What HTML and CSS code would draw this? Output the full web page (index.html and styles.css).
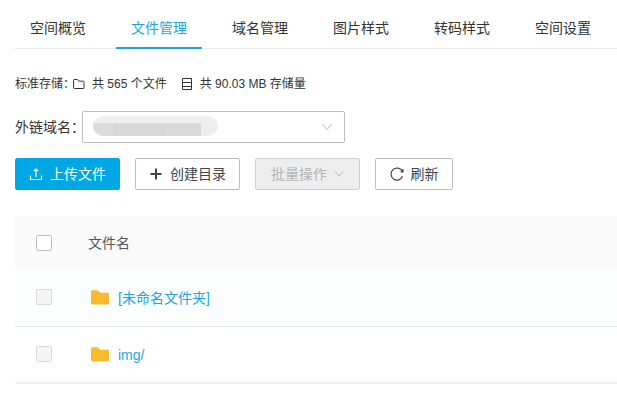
FILE: index.html
```html
<!DOCTYPE html>
<html lang="zh-CN">
<head>
<meta charset="utf-8">
<meta name="viewport" content="width=device-width, initial-scale=1">
<title>文件管理</title>
<link rel="stylesheet" href="styles.css">
</head>
<body>
<main class="page">
  <nav class="tabs">
    <a class="tab" href="#overview">空间概览</a>
    <a class="tab active" href="#files" aria-current="page">文件管理</a>
    <a class="tab" href="#domains">域名管理</a>
    <a class="tab" href="#images">图片样式</a>
    <a class="tab" href="#transcode">转码样式</a>
    <a class="tab" href="#settings">空间设置</a>
  </nav>

  <div class="stats">
    <span class="stats-label">标准存储：</span>
    <span class="stat">
      <svg class="stat-icon" viewBox="0 0 12 12" aria-hidden="true"><path d="M1.2 1.5h3.2l1.4 1.7h4.6q.6 0 .6.6v6q0 .7-.6.7H1.3q-.7 0-.7-.7V2.1q0-.6.6-.6z"/></svg>
      <span>共 565 个文件</span>
    </span>
    <span class="stat">
      <svg class="stat-icon" viewBox="0 0 12 12" aria-hidden="true"><path d="M1.5 .5h9v11h-9zM1.5 4.5h9M1.5 8.5h9"/></svg>
      <span>共 90.03 MB 存储量</span>
    </span>
  </div>

  <div class="domain">
    <label class="domain-label" for="domain">外链域名：</label>
    <div class="select-box">
      <select id="domain" class="select"><option></option></select>
      <span class="masked"></span>
      <svg class="chevron select-chevron" viewBox="0 0 10 8" aria-hidden="true"><path d="M.7 1L5 6.6 9.3 1"/></svg>
    </div>
  </div>

  <div class="actions">
    <button class="btn primary" type="button">
      <svg class="icon" viewBox="0 0 14 14" aria-hidden="true"><path d="M1.5 8.5v4h11v-4M7 10V2.2M4.8 4.2L7 2l2.2 2.2" stroke-width="1.2"/></svg>
      <span>上传文件</span>
    </button>
    <button class="btn" type="button">
      <svg class="icon plus" viewBox="0 0 14 14" aria-hidden="true"><path d="M7 1.5v11M1.5 7h11"/></svg>
      <span>创建目录</span>
    </button>
    <button class="btn" type="button" disabled>
      <span>批量操作</span>
      <svg class="chevron" viewBox="0 0 10 8" aria-hidden="true"><path d="M1 1l4 5.2L9 1"/></svg>
    </button>
    <button class="btn compact" type="button">
      <svg class="icon" viewBox="0 0 14 14" aria-hidden="true"><path d="M12.6 9.3A6 6 0 1 1 12.4 4.4M12.9 1.9v2.9h-2.3" stroke-width="1.2"/></svg>
      <span>刷新</span>
    </button>
  </div>

  <table class="files">
    <thead>
      <tr>
        <th class="check-cell"><input class="check" type="checkbox" aria-label="全选"></th>
        <th>文件名</th>
      </tr>
    </thead>
    <tbody>
      <tr class="current">
        <td class="check-cell"><input class="check" type="checkbox" aria-label="[未命名文件夹]" disabled></td>
        <td><a class="file" href="#unnamed"><svg class="folder" viewBox="0 0 18 15" aria-hidden="true"><path d="M1.3 .3h5.2q.6 0 1 .5l1.8 2h7.2q1.5 0 1.5 1.4v9q0 1.4-1.4 1.4H1.4Q0 14.6 0 13.2V1.6Q0 .3 1.3 .3z"/></svg><span>[未命名文件夹]</span></a></td>
      </tr>
      <tr>
        <td class="check-cell"><input class="check" type="checkbox" aria-label="img/" disabled></td>
        <td><a class="file" href="#img"><svg class="folder" viewBox="0 0 18 15" aria-hidden="true"><path d="M1.3 .3h5.2q.6 0 1 .5l1.8 2h7.2q1.5 0 1.5 1.4v9q0 1.4-1.4 1.4H1.4Q0 14.6 0 13.2V1.6Q0 .3 1.3 .3z"/></svg><span>img/</span></a></td>
      </tr>
    </tbody>
  </table>
</main>
</body>
</html>
```
FILE: styles.css
```css
* {
  box-sizing: border-box;
}

body {
  margin: 0;
  background: #fff;
  color: #333;
  font: 14px/20px "Liberation Sans", "Noto Sans CJK SC", sans-serif;
}

svg {
  flex: none;
  fill: none;
  stroke: currentColor;
}

.page {
  padding: 8px 0 0 15px;
}

.tabs {
  display: flex;
  gap: 15px;
  border-bottom: 1px solid #e8e8e8;
}

.tab {
  margin-bottom: -1px;
  padding: 10px 15px 9px;
  border-bottom: 2px solid transparent;
  color: #333;
  text-decoration: none;
  white-space: nowrap;
}

.tab.active {
  border-color: #1ba5de;
  color: #1ba5de;
}

.stats {
  display: flex;
  align-items: center;
  margin-top: 25px;
  font-size: 12px;
  white-space: nowrap;
}

.stats-label {
  width: 58px;
}

.stat {
  display: flex;
  align-items: center;
  gap: 7px;
  margin-right: 14px;
}

.stat-icon {
  width: 12px;
  height: 12px;
}

.domain {
  display: flex;
  align-items: center;
  margin-top: 17px;
}

.domain-label {
  width: 67px;
  white-space: nowrap;
}

.select-box {
  position: relative;
  flex: 0 1 263px;
}

.select {
  display: block;
  width: 100%;
  height: 32px;
  padding: 0 30px 0 10px;
  appearance: none;
  border: 1px solid #bfbfbf;
  border-radius: 2px;
  background: #fff;
  font: inherit;
}

.masked {
  position: absolute;
  top: 5px;
  left: 11px;
  width: 125px;
  height: 20px;
  border-radius: 10px;
  background:
    linear-gradient(#f0f0f0 0 7px, transparent 7px),
    linear-gradient(90deg, #dcdcdc 0 20px, #d8d8d8 20px 72px, #dadada 72px 108px, #eee 108px);
  pointer-events: none;
}

.chevron {
  width: 10px;
  height: 8px;
  color: #bfbfbf;
}

.select-chevron {
  position: absolute;
  top: 12px;
  right: 13px;
  pointer-events: none;
}

.actions {
  display: flex;
  gap: 15px;
  margin-top: 15px;
}

.btn {
  display: flex;
  align-items: center;
  justify-content: center;
  gap: 7px;
  width: 105px;
  height: 32px;
  padding: 0;
  border: 1px solid #bfbfbf;
  border-radius: 2px;
  background: #fff;
  color: #444;
  font: inherit;
  white-space: nowrap;
}

.btn.primary {
  border-color: #00a7e5;
  background: #00a7e5;
  color: #fff;
}

.btn.compact {
  width: 78px;
}

.btn:disabled {
  border-color: #d0d0d0;
  background: #eee;
  color: #b5b5b5;
}

.icon {
  width: 14px;
  height: 14px;
}

.plus {
  stroke-width: 2;
}

.files {
  width: 100%;
  margin-top: 26px;
  border-collapse: collapse;
  border-bottom: 2px solid #f0f0f0;
}

.files th,
.files td {
  height: 57px;
  padding: 0;
  font-weight: normal;
  text-align: left;
}

.files th {
  height: 53px;
  background: #fafafa;
  color: #555;
}

.files tbody tr + tr {
  border-top: 1px solid #e8e8e8;
}

.files .current {
  background: #fcfefe;
}

.files .check-cell {
  width: 73px;
  padding-left: 21px;
}

.check {
  display: block;
  width: 16px;
  height: 16px;
  margin: 0;
  appearance: none;
  border: 1px solid #bfbfbf;
  border-radius: 2px;
  background: #fff;
}

.check:disabled {
  border-color: #d9d9d9;
  background: #f5f5f5;
}

.file {
  display: inline-flex;
  align-items: center;
  gap: 9px;
  padding-left: 3px;
  color: #1ba5de;
  text-decoration: none;
  vertical-align: middle;
}

.folder {
  width: 18px;
  height: 15px;
  fill: #f9bb2d;
  stroke: none;
}
```
